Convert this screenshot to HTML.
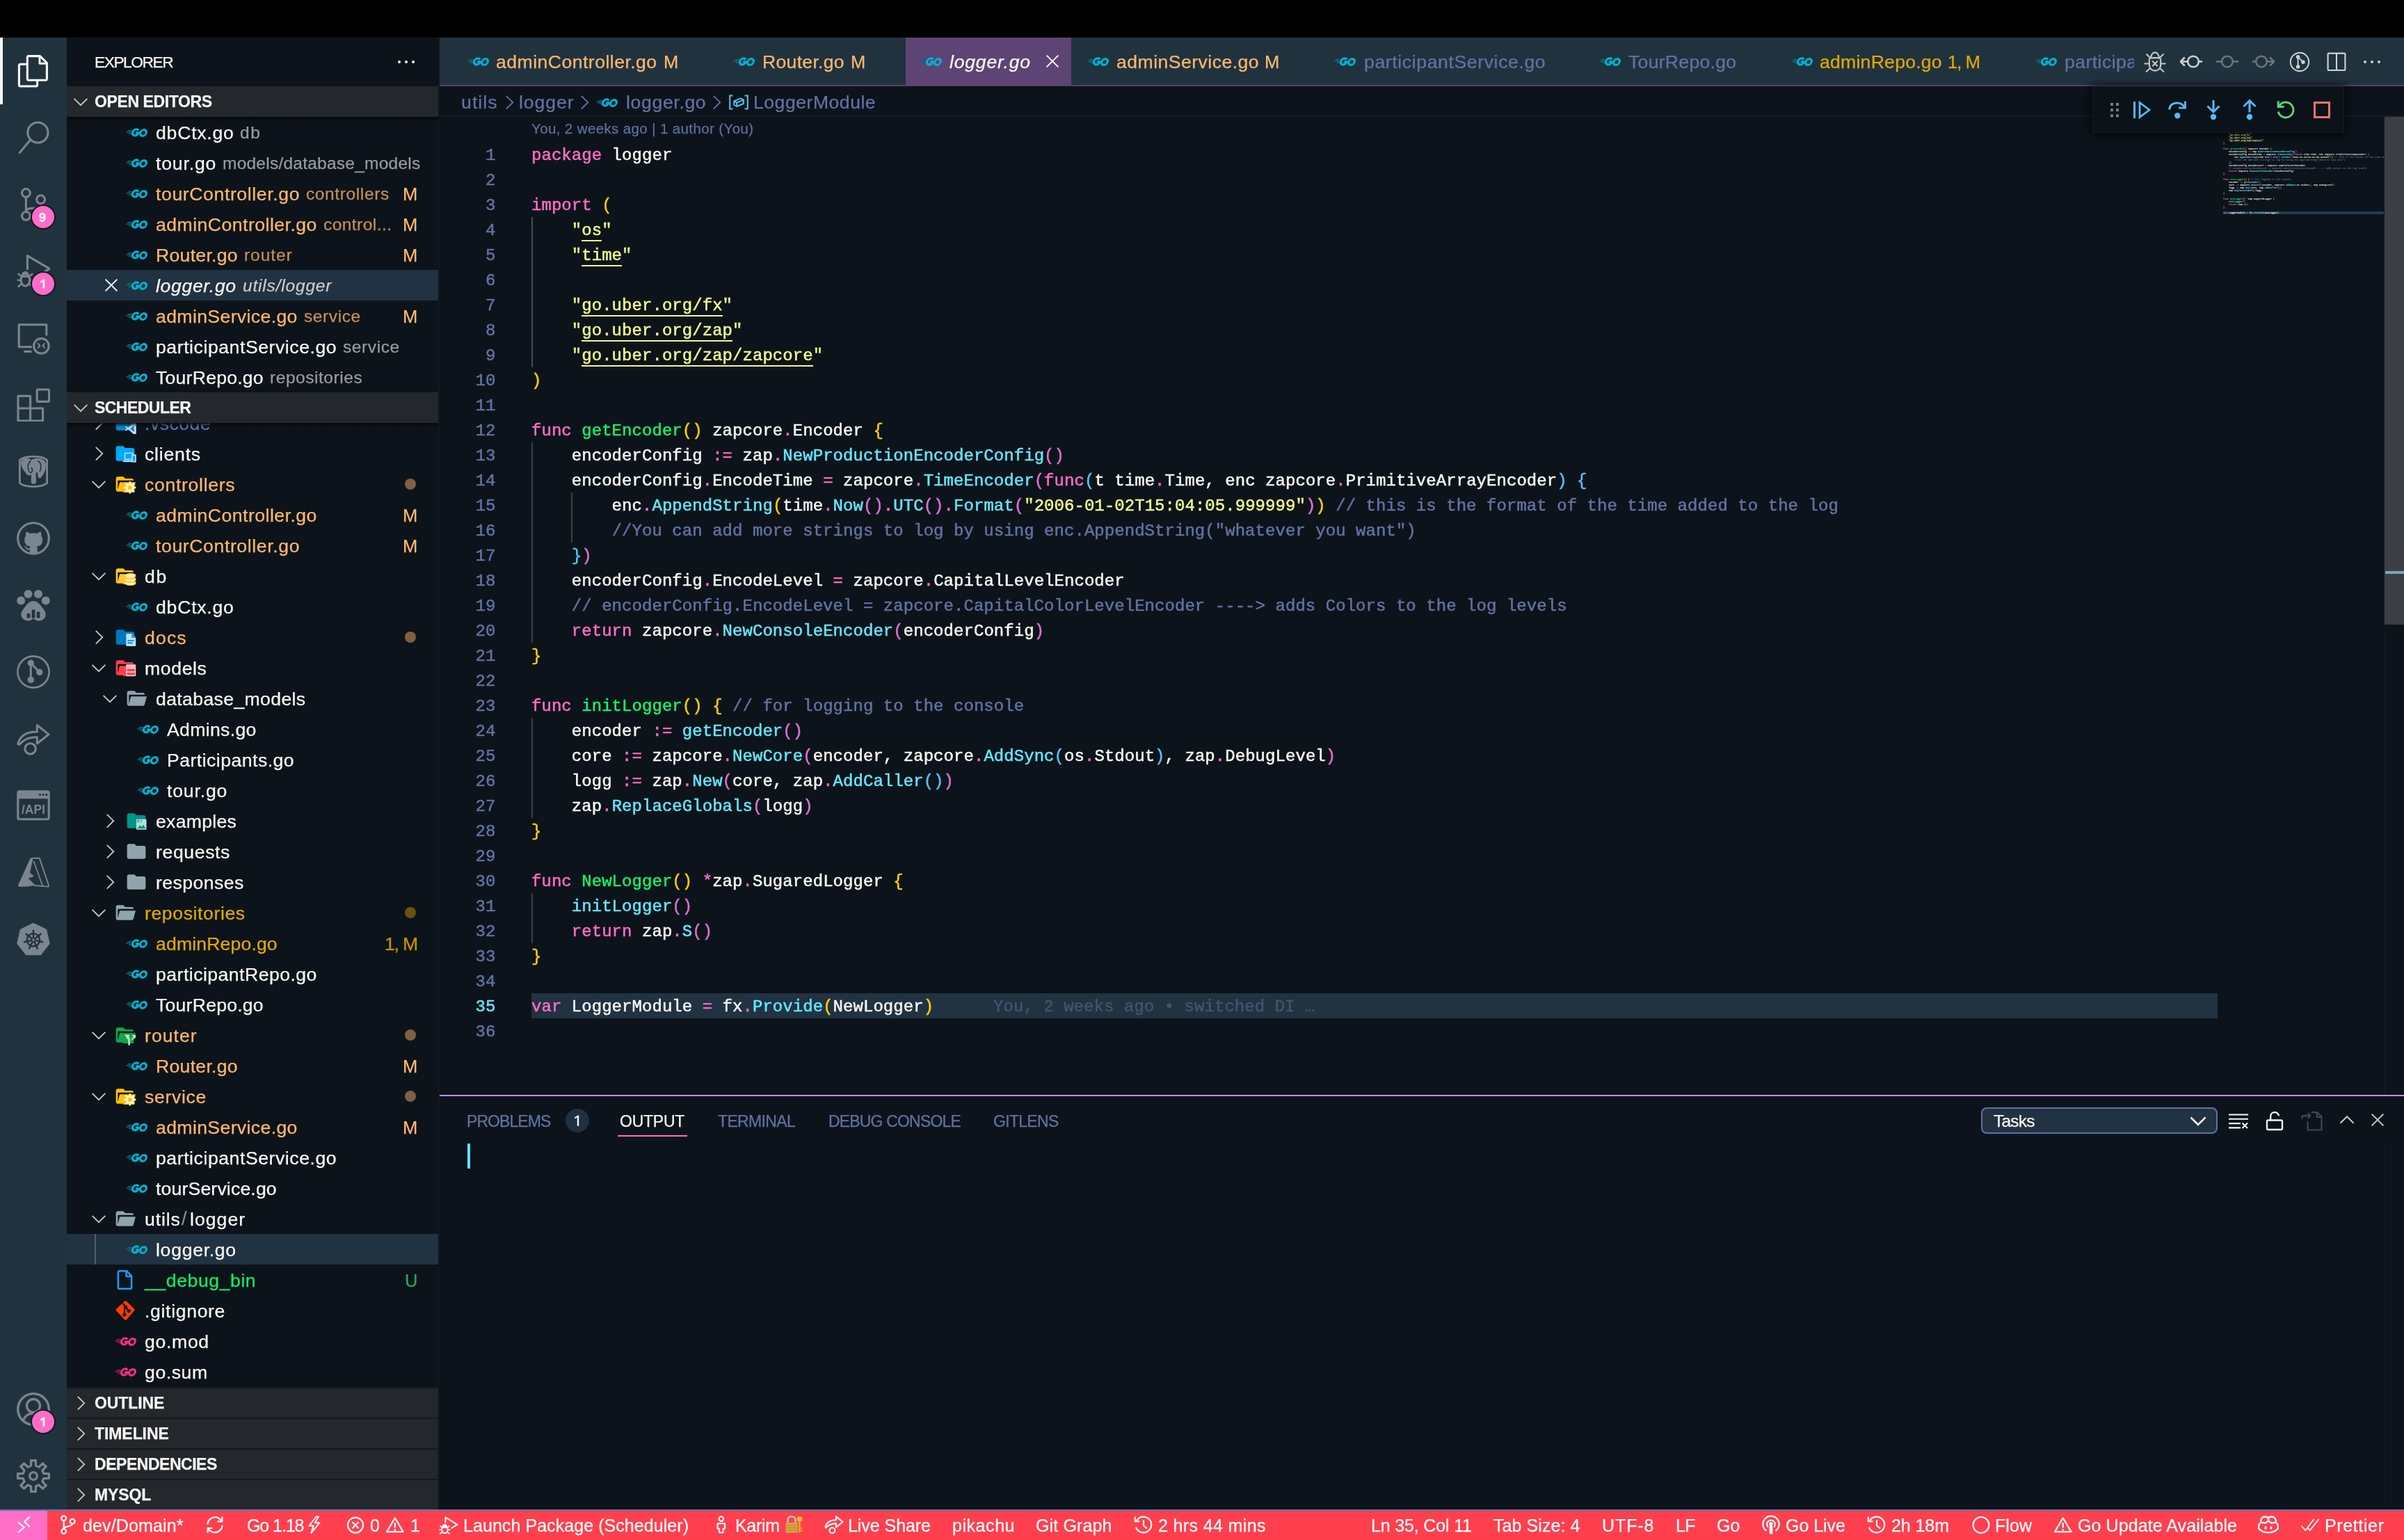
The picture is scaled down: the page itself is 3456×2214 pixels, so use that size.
<!DOCTYPE html>
<html><head><meta charset="utf-8"><title>logger.go — Scheduler</title>
<style>html,body{margin:0;padding:0;background:#0d131a}
body{width:3456px;height:2214px;font-family:"Liberation Sans",sans-serif;}
#root{position:relative;width:3456px;height:2214px;overflow:hidden;background:#0d131a}
#root>div,#root>svg,#root>span,.abs{position:absolute}
.t{position:absolute;white-space:pre;line-height:1;-webkit-text-stroke:0.25px;will-change:transform}
svg{overflow:visible}
.code{position:absolute;white-space:pre;font-family:"Liberation Mono",monospace;font-size:24px;line-height:36px;letter-spacing:0.05px;color:#f8f8f2;-webkit-text-stroke:0.5px;will-change:transform}
.code i{font-style:normal}
.k{color:#ff6ec7}.f{color:#12f56b}.m{color:#62e8ff}.s{color:#f1fa8c}.q{color:#e9f284}.c{color:#6272a4}
.b1{color:#ffd000}.b2{color:#e070d2}.b3{color:#55c3f7}
.u{border-bottom:2px solid #f1fa8c;padding-bottom:0px}
</style></head>
<body>
<svg width="0" height="0" style="position:absolute"><defs><symbol id="chev-d" viewBox="0 0 32 32"><path d="M6.6 11.8 16 21.2 25.4 11.8" fill="none" stroke="currentColor" stroke-width="1.9"/></symbol><symbol id="chev-d2" viewBox="0 0 32 32"><path d="M5.5 11.5 16 22 26.5 11.5" fill="none" stroke="currentColor" stroke-width="2.6"/></symbol><symbol id="chev-u" viewBox="0 0 32 32"><path d="M6.5 20.7 16 11.2 25.5 20.7" fill="none" stroke="currentColor" stroke-width="2"/></symbol><symbol id="chev-r" viewBox="0 0 32 32"><path d="M11.8 6.8 21.2 16.2 11.8 25.6" fill="none" stroke="currentColor" stroke-width="1.9"/></symbol><symbol id="x" viewBox="0 0 32 32"><path d="M7.6 7.6 24.4 24.4M24.4 7.6 7.6 24.4" fill="none" stroke="currentColor" stroke-width="2"/></symbol><symbol id="go" viewBox="0 0 32 32"><g fill="none" stroke="#00b2cf" stroke-width="3.1" transform="translate(3.6 0) skewX(-12)"><path d="M18.4 13.5A4.5 4.5 0 1 0 19.1 18.1L19.1 16.9 15.2 16.9" stroke-linejoin="round"/><ellipse cx="26" cy="17" rx="4.3" ry="4.4"/></g><g stroke="#0a6c7a" stroke-width="1.4" fill="none"><path d="M3.5 13.8H10M1.4 16H8.8M5 18.200H9"/></g></symbol><symbol id="gomod" viewBox="0 0 32 32"><g fill="none" stroke="#fb2d83" stroke-width="3.1" transform="translate(3.6 0) skewX(-12)"><path d="M18.4 13.5A4.5 4.5 0 1 0 19.1 18.1L19.1 16.9 15.2 16.9" stroke-linejoin="round"/><ellipse cx="26" cy="17" rx="4.3" ry="4.4"/></g><g stroke="#a31b4d" stroke-width="1.4" fill="none"><path d="M3.5 13.8H10M1.4 16H8.8M5 18.200H9"/></g></symbol><symbol id="f-closed" viewBox="0 0 24 24"><path d="M10 4H4c-1.11 0-2 .89-2 2v12a2 2 0 0 0 2 2h16a2 2 0 0 0 2-2V8c0-1.11-.9-2-2-2h-8l-2-2z" fill="#90a4ae"/></symbol><symbol id="f-open" viewBox="0 0 24 24"><path d="M19 20H4c-1.11 0-2-.9-2-2V6c0-1.11.89-2 2-2h6l2 2h7a2 2 0 0 1 2 2H4v10l2.14-8h17.07l-2.28 8.5c-.23.87-1.01 1.5-1.93 1.5z" fill="#90a4ae"/></symbol><symbol id="f-clients" viewBox="0 0 24 24"><path d="M10 4H4c-1.11 0-2 .89-2 2v12a2 2 0 0 0 2 2h16a2 2 0 0 0 2-2V8c0-1.11-.9-2-2-2h-8l-2-2z" fill="#03a9f4"/><g fill="none" stroke="#b3e5fc" stroke-width="1.100"><rect x="11.600" y="11.600" width="8.600" height="6.600" fill="#03a9f4"/><path d="M9.600 20.300h9.600" stroke-width="1.700"/><rect x="19.600" y="13.700" width="3.600" height="7.200" fill="#03a9f4" stroke-width="1.200"/></g></symbol><symbol id="f-ctrl" viewBox="0 0 24 24"><path d="M19 20H4c-1.11 0-2-.9-2-2V6c0-1.11.89-2 2-2h6l2 2h7a2 2 0 0 1 2 2H4v10l2.14-8h17.07l-2.28 8.5c-.23.87-1.01 1.5-1.93 1.5z" fill="#ffc107"/><path d="M11 12h11v9H9.6z" fill="#ffc107"/><path d="M15.95 11.35L16.08 9.28L18.12 9.28L18.25 11.35L19.36 11.81L20.92 10.44L22.36 11.88L20.99 13.44L21.45 14.55L23.52 14.68L23.52 16.72L21.45 16.85L20.99 17.96L22.36 19.52L20.92 20.96L19.36 19.59L18.25 20.05L18.12 22.12L16.08 22.12L15.95 20.05L14.84 19.59L13.28 20.96L11.84 19.52L13.21 17.96L12.75 16.85L10.68 16.72L10.68 14.68L12.75 14.55L13.21 13.44L11.84 11.88L13.28 10.44L14.84 11.81Z" fill="#fff3c4"/><circle cx="17.1" cy="15.7" r="2.2" fill="#ffc107"/></symbol><symbol id="f-db" viewBox="0 0 24 24"><path d="M19 20H4c-1.11 0-2-.9-2-2V6c0-1.11.89-2 2-2h6l2 2h7a2 2 0 0 1 2 2H4v10l2.14-8h17.07l-2.28 8.5c-.23.87-1.01 1.5-1.93 1.5z" fill="#ffca28"/><path d="M11 12h11v9H9.6z" fill="#ffca28"/><g fill="#ffecb3" stroke="#ffca28" stroke-width=".5"><path d="M11.900 17.800c1.200 1.900 10.200 1.900 11.400 0v2.600c-1.200 2.300-10.200 2.300-11.400 0z"/><path d="M11.900 14c1.200 1.900 10.200 1.900 11.400 0v2.600c-1.200 2.200-10.200 2.200-11.400 0z"/><ellipse cx="17.600" cy="11.900" rx="5.700" ry="2.700"/></g></symbol><symbol id="f-docs" viewBox="0 0 24 24"><path d="M10 4H4c-1.11 0-2 .89-2 2v12a2 2 0 0 0 2 2h16a2 2 0 0 0 2-2V8c0-1.11-.9-2-2-2h-8l-2-2z" fill="#0277bd"/><path d="M13.800 8.300h5.400l4.200 4.200v8.500a.8.800 0 0 1-.8.800h-8.800a.8.800 0 0 1-.8-.8V9.100a.8.800 0 0 1 .8-.8z" fill="#b3e5fc"/><path d="M19 8.300v4.400h4.400z" fill="#0277bd" opacity=".75"/><path d="M14.600 15.800h7M14.600 18.300h5.400" stroke="#0277bd" stroke-width="1.200" fill="none"/></symbol><symbol id="f-models" viewBox="0 0 24 24"><path d="M19 20H4c-1.11 0-2-.9-2-2V6c0-1.11.89-2 2-2h6l2 2h7a2 2 0 0 1 2 2H4v10l2.14-8h17.07l-2.28 8.5c-.23.87-1.01 1.5-1.93 1.5z" fill="#ff3d4d"/><path d="M11 12h11v9H9.6z" fill="#ff3d4d"/><rect x="12.900" y="8.500" width="10.500" height="12.600" rx="1" fill="#ffcdd2"/><path d="M13.900 13.400h8.500v2.500h-8.500zM13.900 17.300h8.500v2.500h-8.500z" fill="#ff3d4d"/><path d="M13.900 10h8.500v1.800h-8.500z" fill="#ffcdd2" stroke="#ff8a93" stroke-width=".4"/></symbol><symbol id="f-examples" viewBox="0 0 24 24"><path d="M10 4H4c-1.11 0-2 .89-2 2v12a2 2 0 0 0 2 2h16a2 2 0 0 0 2-2V8c0-1.11-.9-2-2-2h-8l-2-2z" fill="#009688"/><rect x="12" y="10.300" width="10.900" height="11.300" rx=".6" fill="#b2dfdb"/><path d="M13 20.500l2.900-3.800 1.800 2 1.800-2.500 2.600 4.300zM13.200 11.500h2.500l-2.500 3zM16.800 11.400l1.400.1-2 2.900" fill="#009688"/></symbol><symbol id="f-router" viewBox="0 0 24 24"><path d="M19 20H4c-1.11 0-2-.9-2-2V6c0-1.11.89-2 2-2h6l2 2h7a2 2 0 0 1 2 2H4v10l2.14-8h17.07l-2.28 8.5c-.23.87-1.01 1.5-1.93 1.5z" fill="#13a64a"/><path d="M11 12h10v9H9.6z" fill="#13a64a"/><path d="M16.2 23v-6.2c0-1.6-1-2.6-2.6-3.2" stroke="#c8e6c9" stroke-width="1.9" fill="none"/><path d="M12.4 12.2l3.6.3-1.6 3.1zM19 17.4l2.4-3.6M20 12.3l3 .6-1 2.9" fill="#c8e6c9" stroke="#c8e6c9" stroke-width="1.2"/></symbol><symbol id="f-vscode" viewBox="0 0 24 24"><path d="M10 4H4c-1.11 0-2 .89-2 2v12a2 2 0 0 0 2 2h16a2 2 0 0 0 2-2V8c0-1.11-.9-2-2-2h-8l-2-2z" fill="#0288d1"/><path d="M21.6 11.2l-6.4 6 -2.4-1.9-1 .6 2.2 2.1-2.2 2.1 1 .6 2.4-1.9 6.4 6 2.2-1v-11.6zM21.4 15v6.4l-4.2-3.2z" fill="#b3e5fc"/></symbol><symbol id="file" viewBox="0 0 32 32"><path d="M7.5 3.2h10.6l7 7.4v16.6a1.6 1.6 0 0 1-1.6 1.6H7.5a1.6 1.6 0 0 1-1.6-1.6V4.8a1.6 1.6 0 0 1 1.6-1.6zM17.6 3.4v7.6h7.2" fill="none" stroke="#1a9fff" stroke-width="2.5" stroke-linejoin="round"/></symbol><symbol id="git" viewBox="0 0 32 32"><path d="M15.4 2.4a1.6 1.6 0 0 1 2.2 0l11.6 11.6a1.6 1.6 0 0 1 0 2.2L17.6 29.6a1.6 1.6 0 0 1-2.2 0L3 16.2a1.6 1.6 0 0 1 0-2.2z" fill="#ff3d00"/><g stroke="#0d131a" stroke-width="2" fill="#0d131a"><path d="M12.2 5.8l5 5M15 10.4v11.2M16.6 12l4.2 4.2" fill="none"/><circle cx="15" cy="22" r="1.6"/><circle cx="16.6" cy="11" r="1.6"/><circle cx="21.2" cy="16.6" r="1.6"/></g></symbol><symbol id="sym-var" viewBox="0 0 32 32"><g fill="none" stroke="currentColor" stroke-width="2.100"><path d="M7.500 6.500H3.200v19h4.300M24.500 6.500h4.300v19h-4.300"/><path d="M9.200 14.400l9.800-4 4 2.200v5.400l-9.800 4-4-2.200zM9.200 14.400l4 2.200 9.800-4M13.200 16.600v5.400" stroke-width="1.900" stroke-linejoin="round"/></g></symbol><symbol id="a-files" viewBox="0 0 48 48"><g fill="none" stroke="currentColor" stroke-width="3.1" stroke-linejoin="round"><path d="M17.3 2.6H33.5L43.4 12.5V35.3a2 2 0 0 1-2 2H17.3a2 2 0 0 1-2-2V4.6a2 2 0 0 1 2-2z"/><path d="M33 2.8v10.4h10.2" stroke-width="2.9"/><path d="M14.8 14.4H5.4a2 2 0 0 0-2 2V44a2 2 0 0 0 2 2H27.6a2 2 0 0 0 2-2V37.6"/></g></symbol><symbol id="a-search" viewBox="0 0 48 48"><g fill="none" stroke="currentColor" stroke-width="3.1"><circle cx="30.4" cy="16.6" r="14.6"/><path d="M19.6 27.2 3.4 46.6"/></g></symbol><symbol id="a-scm" viewBox="0 0 48 48"><g fill="none" stroke="currentColor" stroke-width="3.1"><circle cx="13.4" cy="7.4" r="5.9"/><circle cx="34.6" cy="16.8" r="5.9"/><circle cx="13.4" cy="40.4" r="5.9"/><path d="M13.4 13.4V34.4M34.6 22.8c0 6-6 6.6-12.4 6.6-5 0-8.8 1.2-8.8 5"/></g></symbol><symbol id="a-debug" viewBox="0 0 48 48"><g fill="none" stroke="currentColor" stroke-width="3.1" stroke-linejoin="round"><path d="M15.4 22V1.6L47.2 20.4 34 28.4"/><ellipse cx="12.4" cy="36.6" rx="6.4" ry="8.6"/><path d="M6 31.6h12.8M0.6 36.8h5.4M18.8 36.8h5.4M1.6 27.4l4.6 3.4M23.2 27.4l-4.6 3.4M1.6 46.4l5-4M23.2 46.4l-5-4M8.4 29.6c0-5.6 8-5.6 8 0" stroke-width="2.6"/></g></symbol><symbol id="a-remote" viewBox="0 0 48 48"><g fill="none" stroke="currentColor" stroke-width="3.1" stroke-linejoin="round"><path d="M22 36.8H3.2V4.8H42.8V20.4"/><path d="M10.4 43.4H21.4"/><circle cx="35.4" cy="35.4" r="10.8"/><path d="M30.2 31.4l3.2 3.6-3.2 3.6M40.6 31.4l-3.2 3.6 3.2 3.6" stroke-width="2.1"/></g></symbol><symbol id="a-ext" viewBox="0 0 48 48"><g fill="none" stroke="currentColor" stroke-width="3.1" stroke-linejoin="round"><path d="M2 11.4H19.6V29H37.6V47H2zM2 29H19.6V47" /><rect x="29.2" y="2" width="17.4" height="17.4" rx="1.5"/></g></symbol><symbol id="a-pg" viewBox="0 0 48 48"><g fill="none" stroke="currentColor" stroke-width="3.1"><path d="M4.400 7.400c7-6.600 32.200-6.600 39.200 0V40.600c-7 6.600-32.200 6.600-39.200 0z" stroke-width="2.800"/></g><g fill="currentColor"><path d="M6.500 8.500c3-5 11-5.500 14.500-1 4-3.500 14-4 19.500 1.500 3.500 5.500 1 16-5.500 23.500-1.500 1.500-4.500 1-4.500-1.500l-.5-6c-.8.600-1.600.800-2.500.800l.5 12.500c.3 5-7.300 5-7.300 0l.3-9.800c-3 2-7 .5-8.500-3.500C9 21.500 4.500 13.500 6.500 8.500z"/></g><g fill="none" stroke="#21323f" stroke-width="1.600"><path d="M20.500 8.500c-4.500 3-5.500 9.500-3 15 1.500 3 4.500 2.500 5-1 .3-2-.5-3.500-2-4M30.500 8.500c5 3 5.500 10.500 2.500 15.500"/></g></symbol><symbol id="a-github" viewBox="0 0 48 48"><circle cx="24" cy="24" r="22.3" fill="none" stroke="currentColor" stroke-width="3.1"/><path fill="currentColor" d="M18.800 45.500v-5.300c-4.600 1-5.600-2-5.600-2-.8-1.900-1.900-2.400-1.900-2.400-1.500-1 .1-1 .1-1 1.700.1 2.600 1.700 2.600 1.700 1.500 2.600 4 1.800 4.900 1.400.2-1.100.6-1.800 1-2.200-4.500-.6-8.700-2.400-8.700-10 0-2.200.8-4 2.100-5.400-.2-.5-.9-2.600.2-5.400 0 0 1.700-.5 5.600 2.100a19.400 19.400 0 0 1 10.200 0c3.900-2.600 5.600-2.100 5.600-2.100 1.100 2.800.4 4.900.2 5.400 1.300 1.400 2.100 3.200 2.100 5.400 0 7.700-4.200 9.400-8.700 9.900.7.600 1.300 1.800 1.300 3.700v6.200z"/></symbol><symbol id="a-paw" viewBox="0 0 48 48"><g fill="currentColor"><circle cx="6.200" cy="17.600" r="6"/><circle cx="16.500" cy="8" r="6"/><circle cx="31" cy="8" r="6"/><circle cx="41.800" cy="17.600" r="6"/><path d="M24 18c5.500 0 8.500 4 12 8.500 3.500 4.500 6.500 8 5.500 12.500-1 5-6 7.500-10 7.500-3 0-5.500-1.500-7.500-3.500-2 2-4.500 3.500-7.500 3.500-4 0-9-2.500-10-7.500-1-4.500 2-8 5.500-12.500C15.500 22 18.500 18 24 18z"/></g><g fill="#21323f"><rect x="14.600" y="36" width="4.600" height="6.500"/><rect x="21.700" y="30.500" width="4.600" height="12"/><rect x="28.800" y="33.500" width="4.600" height="9"/></g></symbol><symbol id="a-gitgraph" viewBox="0 0 48 48"><circle cx="24" cy="24" r="22.600" fill="none" stroke="currentColor" stroke-width="2.600"/><g fill="currentColor"><circle cx="20.300" cy="11.200" r="4.700"/><circle cx="32.800" cy="24.400" r="4.700"/><circle cx="20.300" cy="35.400" r="4.700"/></g><path d="M20.300 11.200V35.400M20.300 11.200 32.800 24.400" fill="none" stroke="currentColor" stroke-width="3"/></symbol><symbol id="a-share" viewBox="0 0 48 48"><g fill="none" stroke="currentColor" stroke-width="3.1" stroke-linejoin="round"><path d="M1.800 31.500c3-12 13.500-17.500 27.500-17.500V4.500L46 17.800 29.300 31V21.800c-10-.5-18 2-25.500 10.700z" stroke-width="3"/><circle cx="19.600" cy="38.400" r="7.700"/></g></symbol><symbol id="a-api" viewBox="0 0 48 48"><rect x="1.800" y="3.800" width="44.400" height="40" rx="2" fill="none" stroke="currentColor" stroke-width="3.1"/><rect x="1.800" y="3.800" width="44.400" height="10.500" fill="currentColor"/><g fill="#21323f"><circle cx="33.500" cy="8.500" r="1.600"/><circle cx="38.200" cy="8.500" r="1.600"/><circle cx="42.900" cy="8.500" r="1.600"/></g><text x="7" y="35.500" font-family="Liberation Sans" font-weight="700" font-size="17.500" fill="currentColor" textLength="34" lengthAdjust="spacingAndGlyphs">/API</text></symbol><symbol id="a-azure" viewBox="0 0 48 48"><path fill="currentColor" d="M19.800 3.400h3.800L19 24.500l6 5.200-9.500 3.500 10 9.800c-6 1-14 2-21.200 2-1.800 0-2.500-1.400-1.900-3.200z"/><path d="M22.800 3.800H32.800L46 42.800c.4 1.300-.4 1.900-1.500 1.800L25.800 43 15.800 33.300" fill="none" stroke="currentColor" stroke-width="1.900" stroke-linejoin="round"/><path d="M24.300 8 37.500 44" fill="none" stroke="currentColor" stroke-width="1.700"/></symbol><symbol id="a-k8s" viewBox="0 0 48 48"><polygon points="24.00,2.00 42.22,10.77 46.72,30.48 34.11,46.29 13.89,46.29 1.28,30.48 5.78,10.77" fill="currentColor" stroke="currentColor" stroke-width="2" stroke-linejoin="round"/><g fill="none" stroke="#21323f" stroke-width="2.400"><circle cx="24" cy="25.300" r="9.200"/><path d="M24 25.300L24.00 10.80M24 25.300L35.34 16.26M24 25.300L38.14 28.53M24 25.300L30.29 38.36M24 25.300L17.71 38.36M24 25.300L9.86 28.53M24 25.300L12.66 16.26"/></g><circle cx="24" cy="25.300" r="2.600" fill="currentColor" stroke="#21323f" stroke-width="1.500"/></symbol><symbol id="a-account" viewBox="0 0 48 48"><g fill="none" stroke="currentColor" stroke-width="3.300"><circle cx="24" cy="24" r="22.300"/><circle cx="24" cy="19" r="9.500"/><path d="M9.300 40.500c2-6.500 7.500-10.500 14.700-10.500s12.700 4 14.700 10.500"/></g></symbol><symbol id="a-gear" viewBox="0 0 48 48"><path d="M20.45 9.22L20.82 1.63L27.18 1.63L27.55 9.22L31.94 11.04L37.57 5.93L42.07 10.43L36.96 16.06L38.78 20.45L46.37 20.82L46.37 27.18L38.78 27.55L36.96 31.94L42.07 37.57L37.57 42.07L31.94 36.96L27.55 38.78L27.18 46.37L20.82 46.37L20.45 38.78L16.06 36.96L10.43 42.07L5.93 37.57L11.04 31.94L9.22 27.55L1.63 27.18L1.63 20.82L9.22 20.45L11.04 16.06L5.93 10.43L10.43 5.93L16.06 11.04Z" fill="none" stroke="currentColor" stroke-width="3.300" stroke-linejoin="miter"/><circle cx="24" cy="24" r="5.300" fill="none" stroke="currentColor" stroke-width="3.300"/></symbol><symbol id="e-bug" viewBox="0 0 32 32"><g fill="none" stroke="currentColor" stroke-width="2.1"><path d="M7.800 12c0-2.500 16.400-2.500 16.400 0v8c0 11.500-16.400 11.500-16.400 0z"/><path d="M10.300 10.200c0-10.500 11.400-10.500 11.400 0M3.500 4.500l5.500 5.500M28.500 4.500 23 10M0.500 18.500h7M24.500 18.500h7M3 30.500l6-5.500M29 30.500l-6-5.500M12.200 14.700l7.600 7.600M19.800 14.700l-7.600 7.600"/></g></symbol><symbol id="e-prev" viewBox="0 0 32 32"><g fill="none" stroke="currentColor" stroke-width="2.500"><circle cx="19" cy="15.500" r="7.800"/><path d="M0.800 15.500h10.400M27 15.500h5M6.800 9.500l-6 6 6 6"/></g></symbol><symbol id="e-mid" viewBox="0 0 32 32"><g fill="none" stroke="currentColor" stroke-width="2.500"><circle cx="16" cy="15.500" r="7.800"/><path d="M0 15.500h8.200M23.800 15.500h8.200"/></g></symbol><symbol id="e-next" viewBox="0 0 32 32"><g fill="none" stroke="currentColor" stroke-width="2.500"><circle cx="13" cy="15.500" r="7.800"/><path d="M0 15.500h5.200M20.800 15.500h10.400M25.200 9.500l6 6-6 6"/></g></symbol><symbol id="e-gitc" viewBox="0 0 32 32"><circle cx="16" cy="16" r="13.200" fill="none" stroke="currentColor" stroke-width="2"/><g fill="currentColor"><circle cx="13.600" cy="8.800" r="2.700"/><circle cx="21" cy="16.200" r="2.700"/><circle cx="13.600" cy="23" r="2.700"/></g><path d="M13.600 8.800V23M13.600 8.800l7.400 7.400" fill="none" stroke="currentColor" stroke-width="1.900"/></symbol><symbol id="e-split" viewBox="0 0 32 32"><g fill="none" stroke="currentColor" stroke-width="2.100"><rect x="3.600" y="3.600" width="24.800" height="24.400" rx="1.500"/><path d="M16 3.600V28"/></g></symbol><symbol id="d-grip" viewBox="0 0 32 32"><g fill="currentColor"><rect x="10" y="6" width="4" height="4"/><rect x="18" y="6" width="4" height="4"/><rect x="10" y="14.200" width="4" height="4"/><rect x="18" y="14.200" width="4" height="4"/><rect x="10" y="22.400" width="4" height="4"/><rect x="18" y="22.400" width="4" height="4"/></g></symbol><symbol id="d-cont" viewBox="0 0 32 32"><path d="M5.500 4v24" fill="none" stroke="currentColor" stroke-width="3"/><path d="M13 5.500V26.500L27 16z" fill="none" stroke="currentColor" stroke-width="2.800" stroke-linejoin="miter"/></symbol><symbol id="d-over" viewBox="0 0 32 32"><path d="M4.500 15.500C6.500 3 22 3.500 27 12.500" fill="none" stroke="currentColor" stroke-width="3"/><path d="M27.500 3.500V13.200H18" fill="none" stroke="currentColor" stroke-width="2.800"/><circle cx="16.300" cy="24.200" r="4.200" fill="currentColor"/></symbol><symbol id="d-into" viewBox="0 0 32 32"><path d="M16 2v16.500M7.500 10.500 16 19l8.500-8.500" fill="none" stroke="currentColor" stroke-width="3"/><circle cx="16" cy="26" r="4.200" fill="currentColor"/></symbol><symbol id="d-out" viewBox="0 0 32 32"><path d="M16 19.500V3M7.500 11 16 2.500 24.500 11" fill="none" stroke="currentColor" stroke-width="3"/><circle cx="16" cy="26" r="4.200" fill="currentColor"/></symbol><symbol id="d-restart" viewBox="0 0 32 32"><path d="M6.800 9.800A11 11 0 1 1 5.200 18.500" fill="none" stroke="currentColor" stroke-width="3"/><path d="M5.200 3.200v8.200h8.400" fill="none" stroke="currentColor" stroke-width="3"/></symbol><symbol id="d-stop" viewBox="0 0 32 32"><rect x="5.500" y="5.500" width="21" height="21" fill="none" stroke="currentColor" stroke-width="3"/></symbol><symbol id="p-clear" viewBox="0 0 32 32"><path d="M2 7.500h28M2 13.800h28M2 20.100h17M2 26.400h17M21.500 19.500l7.500 7.500M29 19.500l-7.500 7.500" fill="none" stroke="currentColor" stroke-width="2.100"/></symbol><symbol id="p-unlock" viewBox="0 0 32 32"><g fill="none" stroke="currentColor" stroke-width="2.300"><rect x="5" y="15.500" width="22" height="13.500" rx="1.800"/><path d="M10.200 15.500V9.800c0-7.500 11.600-7.500 11.600 -0.600"/></g></symbol><symbol id="p-open" viewBox="0 0 32 32"><g fill="none" stroke="currentColor" stroke-width="2.200" stroke-linejoin="round"><path d="M14.500 4.200h8.700l6.300 6.300V29.500H9.500V17"/><path d="M22.800 4.400v6.600h6.600M1.600 13.500V9.200H13M9.800 5.600l3.600 3.600-3.600 3.600"/></g></symbol><symbol id="s-remote" viewBox="0 0 32 32"><path d="M8 12.400l8.800 7.400-8.800 7.400M24.800 4.400l-7.400 7.400 7.400 7.400" fill="none" stroke="currentColor" stroke-width="2.200"/></symbol><symbol id="s-branch" viewBox="0 0 32 32"><g fill="none" stroke="currentColor" stroke-width="2.200"><circle cx="11.700" cy="6.800" r="3.400"/><circle cx="24.200" cy="11.200" r="3.400"/><circle cx="11.700" cy="25.600" r="3.400"/><path d="M11.700 10.200v12M24.200 14.600c0 5-12.500 2.500-12.500 7.600"/></g></symbol><symbol id="s-sync" viewBox="0 0 32 32"><g fill="none" stroke="currentColor" stroke-width="2.200"><path d="M5.400 15.600A10.700 10.700 0 0 1 25.600 11M26.600 16.800A10.700 10.700 0 0 1 6.400 21.400"/><path d="M26.400 4.600v6.800h-6.800M5.600 27.800v-6.800h6.800" stroke-width="2.100"/></g></symbol><symbol id="s-zap" viewBox="0 0 32 32"><path d="M19.500 4.500 9.500 17.500h6.200L12.200 28 24.500 13.200h-6.800L22.800 4.500z" fill="none" stroke="currentColor" stroke-width="2" stroke-linejoin="round"/></symbol><symbol id="s-error" viewBox="0 0 32 32"><g fill="none" stroke="currentColor" stroke-width="2.200"><circle cx="16" cy="16.600" r="11"/><path d="M11.400 12l9.200 9.200M20.600 12l-9.200 9.200"/></g></symbol><symbol id="s-warn" viewBox="0 0 32 32"><g fill="none" stroke="currentColor" stroke-width="2.200" stroke-linejoin="round"><path d="M15.800 6.400 27.600 26.200H4z"/><path d="M15.800 13.200v7M15.800 22.200v2.400" stroke-width="2.400"/></g></symbol><symbol id="s-debug" viewBox="0 0 32 32"><g fill="none" stroke="currentColor" stroke-width="2" stroke-linejoin="round"><path d="M11.400 13.500V5.400L28.500 15.800 19.500 21.200"/><ellipse cx="10.400" cy="23" rx="4.200" ry="5.200"/><path d="M6.200 20h8.400M2.400 23.200h3.600M14.800 23.200h3.600M3.200 17.400l3 2.400M17.600 17.400l-3 2.400M3.200 29.400l3.400-2.600M17.600 29.400l-3.400-2.600M7.800 18.600c0-3.600 5.200-3.600 5.200 0" stroke-width="1.800"/></g></symbol><symbol id="s-person" viewBox="0 0 32 32"><g fill="none" stroke="currentColor" stroke-width="2.100"><circle cx="15.800" cy="7.600" r="3.300"/><path d="M10.600 14.200h10.400v7.400h-2.400v5.600h-5.600v-5.600h-2.400z" stroke-linejoin="round"/></g></symbol><symbol id="s-lock" viewBox="0 0 32 32"><path d="M7.500 14V9.500c0-7 11-7 11 0V14" fill="none" stroke="#b9c0c4" stroke-width="2.600"/><rect x="4.500" y="13" width="17.500" height="14.500" rx="1.500" fill="#d9a441"/><path d="M4.500 17h17.500M4.500 20.500h17.500M4.500 24h17.500" stroke="#b8862c" stroke-width="1.200"/><g fill="#f6b93b" stroke="#c98a1b" stroke-width=".6"><circle cx="24.500" cy="8" r="4"/><rect x="23.200" y="11" width="2.600" height="16"/><rect x="25.800" y="20" width="2.400" height="2"/><rect x="25.800" y="23.500" width="2.400" height="2"/></g></symbol><symbol id="s-share" viewBox="0 0 32 32"><g fill="none" stroke="currentColor" stroke-width="2.100" stroke-linejoin="round"><path d="M3.600 19.500c1.600-7 7.600-10.200 15.400-10.200V4.400L28.600 12 19 19.600V14.400c-5.800-.3-10.400 1.200-14.600 6z"/><circle cx="13.400" cy="24.200" r="3.900"/></g></symbol><symbol id="s-history" viewBox="0 0 32 32"><g fill="none" stroke="currentColor" stroke-width="2.200"><path d="M6.200 9.800A11.400 11.400 0 1 1 5 19.600"/><path d="M3.800 4.600v6.600h6.600M16 9v8.200l5 4.200" stroke-width="2.100"/></g></symbol><symbol id="s-broadcast" viewBox="0 0 32 32"><g fill="none" stroke="currentColor" stroke-width="2.200"><path d="M9.500 24.800A11.600 11.600 0 1 1 22.500 24.800"/><path d="M11.800 19.500A5.800 5.800 0 1 1 20.200 19.500"/></g><circle cx="16" cy="15" r="2.700" fill="currentColor"/><rect x="13.600" y="17.500" width="4.800" height="12" rx="1.600" fill="currentColor"/></symbol><symbol id="s-circle" viewBox="0 0 32 32"><circle cx="16" cy="16.400" r="11.400" fill="none" stroke="currentColor" stroke-width="2.200"/></symbol><symbol id="s-copilot" viewBox="0 0 32 32"><g fill="none" stroke="currentColor" stroke-width="2.300" stroke-linejoin="round"><path d="M5.500 13.500c-1.500-6.500 2.500-9 6-9 3 0 4.500 1.500 4.500 4 0-2.500 1.500-4 4.500-4 3.500 0 7.500 2.500 6 9"/><path d="M5 13.500c-2 .8-2.800 2.200-2.800 4.200v3.800c3 3.600 8.400 5.800 13.800 5.800s10.800-2.200 13.800-5.800v-3.800c0-2-.8-3.400-2.800-4.200"/><path d="M6.500 12.500c2 1.500 7.500 1.500 9.500-2.500 2 4 7.500 4 9.500 2.500"/><path d="M12 18.500v4M20 18.500v4" stroke-width="2.600"/></g></symbol><symbol id="s-checkall" viewBox="0 0 32 32"><path d="M3.500 17.800l6 6.400L21.500 8M12.800 20.600l3 3.600L28.500 8" fill="none" stroke="currentColor" stroke-width="1.800"/></symbol></defs></svg>
<div id="root"><div style="left:0px;top:0px;width:3456px;height:54px;background:#000;"></div><div style="left:0px;top:54px;width:96px;height:2116px;background:#21323f;"></div><div style="left:0px;top:54px;width:4px;height:96px;background:#f8f8f2;"></div><svg style="left:24px;top:78px;color:#f8f8f2;" width="48" height="48"><use href="#a-files"/></svg><svg style="left:24px;top:174px;color:#7b858d;" width="48" height="48"><use href="#a-search"/></svg><svg style="left:24px;top:270px;color:#7b858d;" width="48" height="48"><use href="#a-scm"/></svg><svg style="left:24px;top:366px;color:#7b858d;" width="48" height="48"><use href="#a-debug"/></svg><svg style="left:24px;top:462px;color:#7b858d;" width="48" height="48"><use href="#a-remote"/></svg><svg style="left:24px;top:558px;color:#7b858d;" width="48" height="48"><use href="#a-ext"/></svg><svg style="left:24px;top:654px;color:#7b858d;" width="48" height="48"><use href="#a-pg"/></svg><svg style="left:24px;top:750px;color:#7b858d;" width="48" height="48"><use href="#a-github"/></svg><svg style="left:24px;top:846px;color:#7b858d;" width="48" height="48"><use href="#a-paw"/></svg><svg style="left:24px;top:942px;color:#7b858d;" width="48" height="48"><use href="#a-gitgraph"/></svg><svg style="left:24px;top:1038px;color:#7b858d;" width="48" height="48"><use href="#a-share"/></svg><svg style="left:24px;top:1134px;color:#7b858d;will-change:transform;" width="48" height="48"><use href="#a-api"/></svg><svg style="left:24px;top:1230px;color:#7b858d;" width="48" height="48"><use href="#a-azure"/></svg><svg style="left:24px;top:1326px;color:#7b858d;" width="48" height="48"><use href="#a-k8s"/></svg><svg style="left:24px;top:2002px;color:#7b858d;" width="48" height="48"><use href="#a-account"/></svg><svg style="left:24px;top:2098px;color:#7b858d;" width="48" height="48"><use href="#a-gear"/></svg><div style="left:44px;top:294px;width:36px;height:36px;border-radius:18px;background:#121920"></div><div style="left:46px;top:296px;width:32px;height:32px;border-radius:16px;background:#ff6bc9"></div><span class="t" style="left:56.36px;top:303.86px;font-size:18px;color:#fff;font-weight:700;">9</span><div style="left:44px;top:390px;width:36px;height:36px;border-radius:18px;background:#121920"></div><div style="left:46px;top:392px;width:32px;height:32px;border-radius:16px;background:#ff6bc9"></div><svg style="left:54px;top:400px" width="16" height="16" viewBox="-8 -8 16 16"><path d="M2.300 -6.400v12.900h-2.800v-9.400q-1.600 1.200-3.300 1.600v-2.400q2.500-.8 3.900-2.700z" fill="#fff"/></svg><div style="left:44px;top:2026px;width:36px;height:36px;border-radius:18px;background:#121920"></div><div style="left:46px;top:2028px;width:32px;height:32px;border-radius:16px;background:#ff6bc9"></div><svg style="left:54px;top:2036px" width="16" height="16" viewBox="-8 -8 16 16"><path d="M2.300 -6.400v12.900h-2.800v-9.400q-1.600 1.200-3.300 1.600v-2.400q2.500-.8 3.900-2.700z" fill="#fff"/></svg><div style="left:96px;top:54px;width:534px;height:2116px;background:#0d131a;"></div><div style="left:630px;top:54px;width:2px;height:2116px;background:#10161e;"></div><span class="t" style="left:136.03px;top:78.40px;font-size:22.8px;color:#f8f8f2;letter-spacing:-1.5px;">EXPLORER</span><div style="left:572px;top:87px;width:4px;height:4px;border-radius:2px;background:#f8f8f2"></div><div style="left:582px;top:87px;width:4px;height:4px;border-radius:2px;background:#f8f8f2"></div><div style="left:592px;top:87px;width:4px;height:4px;border-radius:2px;background:#f8f8f2"></div><svg style="left:179.5px;top:174px;" width="32" height="32"><use href="#go"/></svg><span class="t" style="left:223.55px;top:177.58px;font-size:26.6px;color:#f8f8f2;letter-spacing:0.78px;">dbCtx.go</span><span class="t" style="left:345.43px;top:179.36px;font-size:24.5px;color:#9a9c9c;letter-spacing:1.6px;">db</span><svg style="left:179.5px;top:218px;" width="32" height="32"><use href="#go"/></svg><span class="t" style="left:223.55px;top:221.58px;font-size:26.6px;color:#f8f8f2;letter-spacing:0.847px;">tour.go</span><span class="t" style="left:319.93px;top:223.36px;font-size:24.5px;color:#9a9c9c;letter-spacing:0.238px;">models/database_models</span><svg style="left:179.5px;top:262px;" width="32" height="32"><use href="#go"/></svg><span class="t" style="left:223.55px;top:265.58px;font-size:26.6px;color:#ffb86c;letter-spacing:0.613px;">tourController.go</span><span class="t" style="left:439.93px;top:267.36px;font-size:24.5px;color:#c78f57;letter-spacing:0.618px;">controllers</span><span class="t" style="left:579.37px;top:266.51px;font-size:25.5px;color:#ffb86c;">M</span><svg style="left:179.5px;top:306px;" width="32" height="32"><use href="#go"/></svg><span class="t" style="left:223.55px;top:309.58px;font-size:26.6px;color:#ffb86c;letter-spacing:0.482px;">adminController.go</span><span class="t" style="left:464.93px;top:311.36px;font-size:24.5px;color:#c78f57;letter-spacing:0.442px;">control...</span><span class="t" style="left:579.37px;top:310.51px;font-size:25.5px;color:#ffb86c;">M</span><svg style="left:179.5px;top:350px;" width="32" height="32"><use href="#go"/></svg><span class="t" style="left:223.55px;top:353.58px;font-size:26.6px;color:#ffb86c;letter-spacing:0.291px;">Router.go</span><span class="t" style="left:351.18px;top:355.36px;font-size:24.5px;color:#c78f57;letter-spacing:0.937px;">router</span><span class="t" style="left:579.37px;top:354.51px;font-size:25.5px;color:#ffb86c;">M</span><div style="left:96px;top:388px;width:534px;height:44px;background:#213242;"></div><svg style="left:144px;top:394px;color:#f8f8f2;" width="32" height="32"><use href="#x"/></svg><svg style="left:179.5px;top:394px;" width="32" height="32"><use href="#go"/></svg><span class="t" style="left:223.55px;top:397.58px;font-size:26.6px;color:#f8f8f2;font-style:italic;letter-spacing:0.655px;">logger.go</span><span class="t" style="left:348.68px;top:399.36px;font-size:24.5px;color:#c9cbc8;font-style:italic;letter-spacing:0.815px;">utils/logger</span><svg style="left:179.5px;top:438px;" width="32" height="32"><use href="#go"/></svg><span class="t" style="left:223.55px;top:441.58px;font-size:26.6px;color:#ffb86c;letter-spacing:0.381px;">adminService.go</span><span class="t" style="left:436.93px;top:443.36px;font-size:24.5px;color:#c78f57;letter-spacing:0.607px;">service</span><span class="t" style="left:579.37px;top:442.51px;font-size:25.5px;color:#ffb86c;">M</span><svg style="left:179.5px;top:482px;" width="32" height="32"><use href="#go"/></svg><span class="t" style="left:223.55px;top:485.58px;font-size:26.6px;color:#f8f8f2;letter-spacing:0.566px;">participantService.go</span><span class="t" style="left:493.18px;top:487.36px;font-size:24.5px;color:#9a9c9c;letter-spacing:0.607px;">service</span><svg style="left:179.5px;top:526px;" width="32" height="32"><use href="#go"/></svg><span class="t" style="left:223.55px;top:529.58px;font-size:26.6px;color:#f8f8f2;letter-spacing:0.238px;">TourRepo.go</span><span class="t" style="left:388.18px;top:531.36px;font-size:24.5px;color:#9a9c9c;letter-spacing:0.546px;">repositories</span><div style="left:96px;top:124px;width:534px;height:44px;background:#24282d;"></div><svg style="left:100px;top:130px;color:#c5c5c5;" width="32" height="32"><use href="#chev-d"/></svg><span class="t" style="left:136.02px;top:135.33px;font-size:23px;color:#f8f8f2;font-weight:700;letter-spacing:-0.395px;">OPEN EDITORS</span><div style="left:96px;top:168px;width:534px;height:6px;background:linear-gradient(#05080b,rgba(5,8,11,0))"></div><svg style="left:126px;top:592px;color:#c5c5c5;" width="32" height="32"><use href="#chev-r"/></svg><svg style="left:164px;top:592px;" width="32" height="32"><use href="#f-vscode"/></svg><span class="t" style="left:207.80px;top:595.58px;font-size:26.6px;color:#5f72a8;letter-spacing:0.501px;">.vscode</span><svg style="left:126px;top:636px;color:#c5c5c5;" width="32" height="32"><use href="#chev-r"/></svg><svg style="left:164px;top:636px;" width="32" height="32"><use href="#f-clients"/></svg><span class="t" style="left:207.80px;top:639.58px;font-size:26.6px;color:#f8f8f2;letter-spacing:0.795px;">clients</span><svg style="left:126px;top:680px;color:#c5c5c5;" width="32" height="32"><use href="#chev-d"/></svg><svg style="left:164px;top:680px;" width="32" height="32"><use href="#f-ctrl"/></svg><span class="t" style="left:207.80px;top:683.58px;font-size:26.6px;color:#ffb86c;letter-spacing:0.699px;">controllers</span><div style="left:582px;top:688px;width:16px;height:16px;border-radius:8px;background:#80603f"></div><svg style="left:179.75px;top:724px;" width="32" height="32"><use href="#go"/></svg><span class="t" style="left:223.55px;top:727.58px;font-size:26.6px;color:#ffb86c;letter-spacing:0.482px;">adminController.go</span><span class="t" style="left:579.37px;top:728.51px;font-size:25.5px;color:#ffb86c;">M</span><svg style="left:179.75px;top:768px;" width="32" height="32"><use href="#go"/></svg><span class="t" style="left:223.55px;top:771.58px;font-size:26.6px;color:#ffb86c;letter-spacing:0.613px;">tourController.go</span><span class="t" style="left:579.37px;top:772.51px;font-size:25.5px;color:#ffb86c;">M</span><svg style="left:126px;top:812px;color:#c5c5c5;" width="32" height="32"><use href="#chev-d"/></svg><svg style="left:164px;top:812px;" width="32" height="32"><use href="#f-db"/></svg><span class="t" style="left:207.80px;top:815.58px;font-size:26.6px;color:#f8f8f2;letter-spacing:1.6px;">db</span><svg style="left:179.75px;top:856px;" width="32" height="32"><use href="#go"/></svg><span class="t" style="left:223.55px;top:859.58px;font-size:26.6px;color:#f8f8f2;letter-spacing:0.78px;">dbCtx.go</span><svg style="left:126px;top:900px;color:#c5c5c5;" width="32" height="32"><use href="#chev-r"/></svg><svg style="left:164px;top:900px;" width="32" height="32"><use href="#f-docs"/></svg><span class="t" style="left:207.80px;top:903.58px;font-size:26.6px;color:#ffb86c;letter-spacing:1.157px;">docs</span><div style="left:582px;top:908px;width:16px;height:16px;border-radius:8px;background:#80603f"></div><svg style="left:126px;top:944px;color:#c5c5c5;" width="32" height="32"><use href="#chev-d"/></svg><svg style="left:164px;top:944px;" width="32" height="32"><use href="#f-models"/></svg><span class="t" style="left:207.80px;top:947.58px;font-size:26.6px;color:#f8f8f2;letter-spacing:0.635px;">models</span><svg style="left:142px;top:988px;color:#c5c5c5;" width="32" height="32"><use href="#chev-d"/></svg><svg style="left:180px;top:988px;" width="32" height="32"><use href="#f-open"/></svg><span class="t" style="left:223.80px;top:991.58px;font-size:26.6px;color:#f8f8f2;letter-spacing:0.372px;">database_models</span><svg style="left:195.75px;top:1032px;" width="32" height="32"><use href="#go"/></svg><span class="t" style="left:239.55px;top:1035.58px;font-size:26.6px;color:#f8f8f2;letter-spacing:0.344px;">Admins.go</span><svg style="left:195.75px;top:1076px;" width="32" height="32"><use href="#go"/></svg><span class="t" style="left:239.55px;top:1079.58px;font-size:26.6px;color:#f8f8f2;letter-spacing:0.481px;">Participants.go</span><svg style="left:195.75px;top:1120px;" width="32" height="32"><use href="#go"/></svg><span class="t" style="left:239.55px;top:1123.58px;font-size:26.6px;color:#f8f8f2;letter-spacing:0.847px;">tour.go</span><svg style="left:142px;top:1164px;color:#c5c5c5;" width="32" height="32"><use href="#chev-r"/></svg><svg style="left:180px;top:1164px;" width="32" height="32"><use href="#f-examples"/></svg><span class="t" style="left:223.80px;top:1167.58px;font-size:26.6px;color:#f8f8f2;letter-spacing:0.297px;">examples</span><svg style="left:142px;top:1208px;color:#c5c5c5;" width="32" height="32"><use href="#chev-r"/></svg><svg style="left:180px;top:1208px;" width="32" height="32"><use href="#f-closed"/></svg><span class="t" style="left:223.80px;top:1211.58px;font-size:26.6px;color:#f8f8f2;letter-spacing:0.63px;">requests</span><svg style="left:142px;top:1252px;color:#c5c5c5;" width="32" height="32"><use href="#chev-r"/></svg><svg style="left:180px;top:1252px;" width="32" height="32"><use href="#f-closed"/></svg><span class="t" style="left:223.80px;top:1255.58px;font-size:26.6px;color:#f8f8f2;letter-spacing:0.463px;">responses</span><svg style="left:126px;top:1296px;color:#c5c5c5;" width="32" height="32"><use href="#chev-d"/></svg><svg style="left:164px;top:1296px;" width="32" height="32"><use href="#f-open"/></svg><span class="t" style="left:207.80px;top:1299.58px;font-size:26.6px;color:#e0aa00;letter-spacing:0.608px;">repositories</span><div style="left:582px;top:1304px;width:16px;height:16px;border-radius:8px;background:#6b5407"></div><svg style="left:179.75px;top:1340px;" width="32" height="32"><use href="#go"/></svg><span class="t" style="left:223.55px;top:1343.58px;font-size:26.6px;color:#e0aa00;letter-spacing:0.152px;">adminRepo.go</span><span class="t" style="left:553.30px;top:1343.58px;font-size:26.6px;color:#c59600;letter-spacing:-1.2px;">1, M</span><svg style="left:179.75px;top:1384px;" width="32" height="32"><use href="#go"/></svg><span class="t" style="left:223.55px;top:1387.58px;font-size:26.6px;color:#f8f8f2;letter-spacing:0.48px;">participantRepo.go</span><svg style="left:179.75px;top:1428px;" width="32" height="32"><use href="#go"/></svg><span class="t" style="left:223.55px;top:1431.58px;font-size:26.6px;color:#f8f8f2;letter-spacing:0.238px;">TourRepo.go</span><svg style="left:126px;top:1472px;color:#c5c5c5;" width="32" height="32"><use href="#chev-d"/></svg><svg style="left:164px;top:1472px;" width="32" height="32"><use href="#f-router"/></svg><span class="t" style="left:207.80px;top:1475.58px;font-size:26.6px;color:#ffb86c;letter-spacing:1.035px;">router</span><div style="left:582px;top:1480px;width:16px;height:16px;border-radius:8px;background:#80603f"></div><svg style="left:179.75px;top:1516px;" width="32" height="32"><use href="#go"/></svg><span class="t" style="left:223.55px;top:1519.58px;font-size:26.6px;color:#ffb86c;letter-spacing:0.291px;">Router.go</span><span class="t" style="left:579.37px;top:1520.51px;font-size:25.5px;color:#ffb86c;">M</span><svg style="left:126px;top:1560px;color:#c5c5c5;" width="32" height="32"><use href="#chev-d"/></svg><svg style="left:164px;top:1560px;" width="32" height="32"><use href="#f-ctrl"/></svg><span class="t" style="left:207.80px;top:1563.58px;font-size:26.6px;color:#ffb86c;letter-spacing:0.693px;">service</span><div style="left:582px;top:1568px;width:16px;height:16px;border-radius:8px;background:#80603f"></div><svg style="left:179.75px;top:1604px;" width="32" height="32"><use href="#go"/></svg><span class="t" style="left:223.55px;top:1607.58px;font-size:26.6px;color:#ffb86c;letter-spacing:0.381px;">adminService.go</span><span class="t" style="left:579.37px;top:1608.51px;font-size:25.5px;color:#ffb86c;">M</span><svg style="left:179.75px;top:1648px;" width="32" height="32"><use href="#go"/></svg><span class="t" style="left:223.55px;top:1651.58px;font-size:26.6px;color:#f8f8f2;letter-spacing:0.566px;">participantService.go</span><svg style="left:179.75px;top:1692px;" width="32" height="32"><use href="#go"/></svg><span class="t" style="left:223.55px;top:1695.58px;font-size:26.6px;color:#f8f8f2;letter-spacing:0.167px;">tourService.go</span><svg style="left:126px;top:1736px;color:#c5c5c5;" width="32" height="32"><use href="#chev-d"/></svg><svg style="left:164px;top:1736px;" width="32" height="32"><use href="#f-open"/></svg><span class="t" style="left:207.80px;top:1739.58px;font-size:26.6px;color:#f8f8f2;letter-spacing:0.903px;">utils</span><span class="t" style="left:261.28px;top:1739.24px;font-size:27px;color:#8d8f90;letter-spacing:1.6px;">/</span><span class="t" style="left:273.30px;top:1739.58px;font-size:26.6px;color:#f8f8f2;letter-spacing:1.044px;">logger</span><div style="left:96px;top:1774px;width:534px;height:44px;background:#213242;"></div><div style="left:136px;top:1774px;width:2px;height:44px;background:#585b5e;"></div><svg style="left:179.75px;top:1780px;" width="32" height="32"><use href="#go"/></svg><span class="t" style="left:223.55px;top:1783.58px;font-size:26.6px;color:#f8f8f2;letter-spacing:0.715px;">logger.go</span><svg style="left:164px;top:1824px;" width="32" height="32"><use href="#file"/></svg><span class="t" style="left:207.80px;top:1827.58px;font-size:26.6px;color:#0bf26a;letter-spacing:0.585px;">__debug_bin</span><span class="t" style="left:582.37px;top:1828.51px;font-size:25.5px;color:#12b457;">U</span><svg style="left:164px;top:1868px;" width="32" height="32"><use href="#git"/></svg><span class="t" style="left:207.80px;top:1871.58px;font-size:26.6px;color:#f8f8f2;letter-spacing:0.667px;">.gitignore</span><svg style="left:164px;top:1912px;" width="32" height="32"><use href="#gomod"/></svg><span class="t" style="left:207.80px;top:1915.58px;font-size:26.6px;color:#f8f8f2;letter-spacing:0.691px;">go.mod</span><svg style="left:164px;top:1956px;" width="32" height="32"><use href="#gomod"/></svg><span class="t" style="left:207.80px;top:1959.58px;font-size:26.6px;color:#f8f8f2;letter-spacing:0.588px;">go.sum</span><div style="left:96px;top:564px;width:534px;height:44px;background:#24282d;"></div><svg style="left:100px;top:570px;color:#c5c5c5;" width="32" height="32"><use href="#chev-d"/></svg><span class="t" style="left:136.02px;top:575.33px;font-size:23px;color:#f8f8f2;font-weight:700;letter-spacing:-0.541px;">SCHEDULER</span><div style="left:96px;top:608px;width:534px;height:6px;background:linear-gradient(rgba(5,8,11,.9),rgba(5,8,11,0))"></div><div style="left:96px;top:1994px;width:534px;height:176px;background:#161a1f;"></div><div style="left:96px;top:1996px;width:534px;height:42px;background:#24282d;"></div><svg style="left:100px;top:2001px;color:#c5c5c5;" width="32" height="32"><use href="#chev-r"/></svg><span class="t" style="left:136.02px;top:2006.33px;font-size:23px;color:#f8f8f2;font-weight:700;letter-spacing:-0.109px;">OUTLINE</span><div style="left:96px;top:2040px;width:534px;height:42px;background:#24282d;"></div><svg style="left:100px;top:2045px;color:#c5c5c5;" width="32" height="32"><use href="#chev-r"/></svg><span class="t" style="left:136.02px;top:2050.33px;font-size:23px;color:#f8f8f2;font-weight:700;letter-spacing:-0.078px;">TIMELINE</span><div style="left:96px;top:2084px;width:534px;height:42px;background:#24282d;"></div><svg style="left:100px;top:2089px;color:#c5c5c5;" width="32" height="32"><use href="#chev-r"/></svg><span class="t" style="left:136.02px;top:2094.33px;font-size:23px;color:#f8f8f2;font-weight:700;letter-spacing:-0.471px;">DEPENDENCIES</span><div style="left:96px;top:2128px;width:534px;height:42px;background:#24282d;"></div><svg style="left:100px;top:2133px;color:#c5c5c5;" width="32" height="32"><use href="#chev-r"/></svg><span class="t" style="left:136.02px;top:2138.33px;font-size:23px;color:#f8f8f2;font-weight:700;letter-spacing:-0.12px;">MYSQL</span><div style="left:632px;top:54px;width:2824px;height:68px;background:#21323f;"></div><div style="left:632px;top:122px;width:2824px;height:2px;background:#553f70;"></div><div style="left:1302px;top:54px;width:238px;height:69px;background:#5d4474;"></div><svg style="left:670.5px;top:72px;" width="32" height="32"><use href="#go"/></svg><span class="t" style="left:713.30px;top:76.38px;font-size:26.6px;color:#ffb86c;letter-spacing:0.467px;">adminController.go</span><span class="t" style="left:954.37px;top:77.31px;font-size:25.5px;color:#ffb86c;">M</span><svg style="left:1053px;top:72px;" width="32" height="32"><use href="#go"/></svg><span class="t" style="left:1096.30px;top:76.38px;font-size:26.6px;color:#ffb86c;letter-spacing:0.291px;">Router.go</span><span class="t" style="left:1223.37px;top:77.31px;font-size:25.5px;color:#ffb86c;">M</span><svg style="left:1322px;top:72px;" width="32" height="32"><use href="#go"/></svg><span class="t" style="left:1364.80px;top:76.38px;font-size:26.6px;color:#f8f8f2;font-style:italic;letter-spacing:0.78px;">logger.go</span><svg style="left:1496.5px;top:72px;color:#f8f8f2;" width="32" height="32"><use href="#x"/></svg><svg style="left:1562px;top:72px;" width="32" height="32"><use href="#go"/></svg><span class="t" style="left:1605.30px;top:76.38px;font-size:26.6px;color:#ffb86c;letter-spacing:0.47px;">adminService.go</span><span class="t" style="left:1817.87px;top:77.31px;font-size:25.5px;color:#ffb86c;">M</span><svg style="left:1917px;top:72px;" width="32" height="32"><use href="#go"/></svg><span class="t" style="left:1960.60px;top:76.38px;font-size:26.6px;color:#6272a4;letter-spacing:0.616px;">participantService.go</span><svg style="left:2298px;top:72px;" width="32" height="32"><use href="#go"/></svg><span class="t" style="left:2341.20px;top:76.38px;font-size:26.6px;color:#6272a4;letter-spacing:0.278px;">TourRepo.go</span><svg style="left:2574px;top:72px;" width="32" height="32"><use href="#go"/></svg><span class="t" style="left:2616.20px;top:76.38px;font-size:26.6px;color:#e0aa00;letter-spacing:0.243px;">adminRepo.go</span><span class="t" style="left:2800.27px;top:77.31px;font-size:25.5px;color:#e0aa00;letter-spacing:-0.848px;">1, M</span><svg style="left:2925px;top:72px;" width="32" height="32"><use href="#go"/></svg><div style="left:2960px;top:54px;width:108.3px;height:68px;overflow:hidden"><span class="t" style="left:8px;top:21.88px;font-size:26.6px;color:#6272a4;letter-spacing:0.45px">participantRepo.go</span></div><svg style="left:3082px;top:72.5px;color:#c5c8c6;" width="32" height="32"><use href="#e-bug"/></svg><svg style="left:3134px;top:72.5px;color:#d0d3d1;" width="32" height="32"><use href="#e-prev"/></svg><svg style="left:3186px;top:72.5px;color:#6b7780;" width="32" height="32"><use href="#e-mid"/></svg><svg style="left:3238px;top:72.5px;color:#6b7780;" width="32" height="32"><use href="#e-next"/></svg><svg style="left:3290px;top:72.5px;color:#d0d3d1;" width="32" height="32"><use href="#e-gitc"/></svg><svg style="left:3343px;top:72.5px;color:#d0d3d1;" width="32" height="32"><use href="#e-split"/></svg><div style="left:3398px;top:87px;width:4px;height:4px;border-radius:2px;background:#d0d3d1"></div><div style="left:3408px;top:87px;width:4px;height:4px;border-radius:2px;background:#d0d3d1"></div><div style="left:3418px;top:87px;width:4px;height:4px;border-radius:2px;background:#d0d3d1"></div><div style="left:632px;top:124px;width:2824px;height:44px;background:#0d131a;"></div><div style="left:632px;top:166px;width:2824px;height:2px;background:#161c25;"></div><span class="t" style="left:663.30px;top:133.58px;font-size:26.6px;color:#6272a4;letter-spacing:1.091px;">utils</span><svg style="left:716px;top:131px;color:#6272a4;" width="32" height="32"><use href="#chev-r"/></svg><span class="t" style="left:745.80px;top:133.58px;font-size:26.6px;color:#6272a4;letter-spacing:0.944px;">logger</span><svg style="left:824px;top:131px;color:#6272a4;" width="32" height="32"><use href="#chev-r"/></svg><svg style="left:856px;top:131px;" width="32" height="32"><use href="#go"/></svg><span class="t" style="left:899.80px;top:133.58px;font-size:26.6px;color:#6272a4;letter-spacing:0.653px;">logger.go</span><svg style="left:1014px;top:131px;color:#6272a4;" width="32" height="32"><use href="#chev-r"/></svg><svg style="left:1045.5px;top:131px;color:#52bdf5;" width="32" height="32"><use href="#sym-var"/></svg><span class="t" style="left:1083.30px;top:133.58px;font-size:26.6px;color:#6272a4;letter-spacing:0.512px;">LoggerModule</span><div style="left:764px;top:1428px;width:2424px;height:36px;background:#213242;"></div><div style="left:763.5px;top:312px;width:2px;height:216px;background:#4a4d57;"></div><div style="left:763.5px;top:636px;width:2px;height:288px;background:#3b3f4a;"></div><div style="left:820.5px;top:708px;width:2px;height:72px;background:#3b3f4a;"></div><div style="left:763.5px;top:1032px;width:2px;height:144px;background:#3b3f4a;"></div><div style="left:763.5px;top:1284px;width:2px;height:72px;background:#3b3f4a;"></div><span class="t" style="left:763.87px;top:175.15px;font-size:20.5px;color:#5f6f9f;letter-spacing:0.377px;">You, 2 weeks ago | 1 author (You)</span><div class="code" style="left:632px;top:205.9px;width:80.3px;text-align:right;letter-spacing:0"><div style="color:#6272a4">1</div><div style="color:#6272a4">2</div><div style="color:#6272a4">3</div><div style="color:#6272a4">4</div><div style="color:#6272a4">5</div><div style="color:#6272a4">6</div><div style="color:#6272a4">7</div><div style="color:#6272a4">8</div><div style="color:#6272a4">9</div><div style="color:#6272a4">10</div><div style="color:#6272a4">11</div><div style="color:#6272a4">12</div><div style="color:#6272a4">13</div><div style="color:#6272a4">14</div><div style="color:#6272a4">15</div><div style="color:#6272a4">16</div><div style="color:#6272a4">17</div><div style="color:#6272a4">18</div><div style="color:#6272a4">19</div><div style="color:#6272a4">20</div><div style="color:#6272a4">21</div><div style="color:#6272a4">22</div><div style="color:#6272a4">23</div><div style="color:#6272a4">24</div><div style="color:#6272a4">25</div><div style="color:#6272a4">26</div><div style="color:#6272a4">27</div><div style="color:#6272a4">28</div><div style="color:#6272a4">29</div><div style="color:#6272a4">30</div><div style="color:#6272a4">31</div><div style="color:#6272a4">32</div><div style="color:#6272a4">33</div><div style="color:#6272a4">34</div><div style="color:#6ee3f7">35</div><div style="color:#6272a4">36</div></div><div class="code" style="left:763.5px;top:205.9px"><div><i class="k">package</i> logger</div><div> </div><div><i class="k">import</i> <i class="b1">(</i></div><div>    <i class="q">"</i><i class="s u">os</i><i class="q">"</i></div><div>    <i class="q">"</i><i class="s u">time</i><i class="q">"</i></div><div> </div><div>    <i class="q">"</i><i class="s u">go.uber.org/fx</i><i class="q">"</i></div><div>    <i class="q">"</i><i class="s u">go.uber.org/zap</i><i class="q">"</i></div><div>    <i class="q">"</i><i class="s u">go.uber.org/zap/zapcore</i><i class="q">"</i></div><div><i class="b1">)</i></div><div> </div><div><i class="k">func</i> <i class="f">getEncoder</i><i class="b1">()</i> zapcore<i class="k">.</i>Encoder <i class="b1">{</i></div><div>    encoderConfig <i class="k">:=</i> zap<i class="k">.</i><i class="m">NewProductionEncoderConfig</i><i class="b2">()</i></div><div>    encoderConfig<i class="k">.</i>EncodeTime <i class="k">=</i> zapcore<i class="k">.</i><i class="m">TimeEncoder</i><i class="b2">(</i><i class="k">func</i><i class="b3">(</i>t time<i class="k">.</i>Time, enc zapcore<i class="k">.</i>PrimitiveArrayEncoder<i class="b3">)</i> <i class="b3">{</i></div><div>        enc<i class="k">.</i><i class="m">AppendString</i><i class="b1">(</i>time<i class="k">.</i><i class="m">Now</i><i class="b2">()</i><i class="k">.</i><i class="m">UTC</i><i class="b2">()</i><i class="k">.</i><i class="m">Format</i><i class="b2">(</i><i class="q">"</i><i class="s">2006-01-02T15:04:05.999999</i><i class="q">"</i><i class="b2">)</i><i class="b1">)</i> <i class="c">// this is the format of the time added to the log</i></div><div>        <i class="c">//You can add more strings to log by using enc.AppendString("whatever you want")</i></div><div>    <i class="b3">}</i><i class="b2">)</i></div><div>    encoderConfig<i class="k">.</i>EncodeLevel <i class="k">=</i> zapcore<i class="k">.</i>CapitalLevelEncoder</div><div>    <i class="c">// encoderConfig.EncodeLevel = zapcore.CapitalColorLevelEncoder ----&gt; adds Colors to the log levels</i></div><div>    <i class="k">return</i> zapcore<i class="k">.</i><i class="m">NewConsoleEncoder</i><i class="b2">(</i>encoderConfig<i class="b2">)</i></div><div><i class="b1">}</i></div><div> </div><div><i class="k">func</i> <i class="f">initLogger</i><i class="b1">()</i> <i class="b1">{</i> <i class="c">// for logging to the console</i></div><div>    encoder <i class="k">:=</i> <i class="m">getEncoder</i><i class="b2">()</i></div><div>    core <i class="k">:=</i> zapcore<i class="k">.</i><i class="m">NewCore</i><i class="b2">(</i>encoder, zapcore<i class="k">.</i><i class="m">AddSync</i><i class="b3">(</i>os<i class="k">.</i>Stdout<i class="b3">)</i>, zap<i class="k">.</i>DebugLevel<i class="b2">)</i></div><div>    logg <i class="k">:=</i> zap<i class="k">.</i><i class="m">New</i><i class="b2">(</i>core, zap<i class="k">.</i><i class="m">AddCaller</i><i class="b3">()</i><i class="b2">)</i></div><div>    zap<i class="k">.</i><i class="m">ReplaceGlobals</i><i class="b2">(</i>logg<i class="b2">)</i></div><div><i class="b1">}</i></div><div> </div><div><i class="k">func</i> <i class="f">NewLogger</i><i class="b1">()</i> <i class="k">*</i>zap<i class="k">.</i>SugaredLogger <i class="b1">{</i></div><div>    <i class="m">initLogger</i><i class="b2">()</i></div><div>    <i class="k">return</i> zap<i class="k">.</i><i class="m">S</i><i class="b2">()</i></div><div><i class="b1">}</i></div><div> </div><div><i class="k">var</i> LoggerModule <i class="k">=</i> fx<i class="k">.</i><i class="m">Provide</i><i class="b1">(</i>NewLogger<i class="b1">)</i></div><div> </div></div><div class="code" style="left:1428.20px;top:1429.9px;color:#45546a">You, 2 weeks ago • switched DI …</div><div style="left:3188px;top:168px;width:240px;height:1406px;overflow:hidden"><div style="position:absolute;left:8px;top:136px;width:232px;height:4px;background:#213c58"></div><div class="code" style="left:8px;top:0;transform-origin:0 0;transform:scale(0.13841,0.11111);opacity:.8;font-weight:700"><div><i class="k">package</i> logger</div><div> </div><div><i class="k">import</i> <i class="b1">(</i></div><div>    <i class="q">"</i><i class="s u">os</i><i class="q">"</i></div><div>    <i class="q">"</i><i class="s u">time</i><i class="q">"</i></div><div> </div><div>    <i class="q">"</i><i class="s u">go.uber.org/fx</i><i class="q">"</i></div><div>    <i class="q">"</i><i class="s u">go.uber.org/zap</i><i class="q">"</i></div><div>    <i class="q">"</i><i class="s u">go.uber.org/zap/zapcore</i><i class="q">"</i></div><div><i class="b1">)</i></div><div> </div><div><i class="k">func</i> <i class="f">getEncoder</i><i class="b1">()</i> zapcore<i class="k">.</i>Encoder <i class="b1">{</i></div><div>    encoderConfig <i class="k">:=</i> zap<i class="k">.</i><i class="m">NewProductionEncoderConfig</i><i class="b2">()</i></div><div>    encoderConfig<i class="k">.</i>EncodeTime <i class="k">=</i> zapcore<i class="k">.</i><i class="m">TimeEncoder</i><i class="b2">(</i><i class="k">func</i><i class="b3">(</i>t time<i class="k">.</i>Time, enc zapcore<i class="k">.</i>PrimitiveArrayEncoder<i class="b3">)</i> <i class="b3">{</i></div><div>        enc<i class="k">.</i><i class="m">AppendString</i><i class="b1">(</i>time<i class="k">.</i><i class="m">Now</i><i class="b2">()</i><i class="k">.</i><i class="m">UTC</i><i class="b2">()</i><i class="k">.</i><i class="m">Format</i><i class="b2">(</i><i class="q">"</i><i class="s">2006-01-02T15:04:05.999999</i><i class="q">"</i><i class="b2">)</i><i class="b1">)</i> <i class="c">// this is the format of the time added to the log</i></div><div>        <i class="c">//You can add more strings to log by using enc.AppendString("whatever you want")</i></div><div>    <i class="b3">}</i><i class="b2">)</i></div><div>    encoderConfig<i class="k">.</i>EncodeLevel <i class="k">=</i> zapcore<i class="k">.</i>CapitalLevelEncoder</div><div>    <i class="c">// encoderConfig.EncodeLevel = zapcore.CapitalColorLevelEncoder ----&gt; adds Colors to the log levels</i></div><div>    <i class="k">return</i> zapcore<i class="k">.</i><i class="m">NewConsoleEncoder</i><i class="b2">(</i>encoderConfig<i class="b2">)</i></div><div><i class="b1">}</i></div><div> </div><div><i class="k">func</i> <i class="f">initLogger</i><i class="b1">()</i> <i class="b1">{</i> <i class="c">// for logging to the console</i></div><div>    encoder <i class="k">:=</i> <i class="m">getEncoder</i><i class="b2">()</i></div><div>    core <i class="k">:=</i> zapcore<i class="k">.</i><i class="m">NewCore</i><i class="b2">(</i>encoder, zapcore<i class="k">.</i><i class="m">AddSync</i><i class="b3">(</i>os<i class="k">.</i>Stdout<i class="b3">)</i>, zap<i class="k">.</i>DebugLevel<i class="b2">)</i></div><div>    logg <i class="k">:=</i> zap<i class="k">.</i><i class="m">New</i><i class="b2">(</i>core, zap<i class="k">.</i><i class="m">AddCaller</i><i class="b3">()</i><i class="b2">)</i></div><div>    zap<i class="k">.</i><i class="m">ReplaceGlobals</i><i class="b2">(</i>logg<i class="b2">)</i></div><div><i class="b1">}</i></div><div> </div><div><i class="k">func</i> <i class="f">NewLogger</i><i class="b1">()</i> <i class="k">*</i>zap<i class="k">.</i>SugaredLogger <i class="b1">{</i></div><div>    <i class="m">initLogger</i><i class="b2">()</i></div><div>    <i class="k">return</i> zap<i class="k">.</i><i class="m">S</i><i class="b2">()</i></div><div><i class="b1">}</i></div><div> </div><div><i class="k">var</i> LoggerModule <i class="k">=</i> fx<i class="k">.</i><i class="m">Provide</i><i class="b1">(</i>NewLogger<i class="b1">)</i></div><div> </div></div></div><div style="left:3428px;top:168px;width:28px;height:730px;background:#3c3f43;"></div><div style="left:3429px;top:821px;width:27px;height:4px;background:#77a8bc;"></div><div style="left:3427px;top:168px;width:1px;height:1406px;background:#151b23;"></div><div style="left:3008px;top:124px;width:362px;height:67px;background:#0c1219;box-shadow:0 0 12px 2px rgba(0,0,0,.7);border:1.5px solid #171d27;box-sizing:border-box"></div><svg style="left:3024px;top:142px;color:#7d7f82;" width="32" height="32"><use href="#d-grip"/></svg><svg style="left:3063px;top:142px;color:#55b9f6;" width="32" height="32"><use href="#d-cont"/></svg><svg style="left:3114px;top:142px;color:#55b9f6;" width="32" height="32"><use href="#d-over"/></svg><svg style="left:3166px;top:142px;color:#55b9f6;" width="32" height="32"><use href="#d-into"/></svg><svg style="left:3218px;top:142px;color:#55b9f6;" width="32" height="32"><use href="#d-out"/></svg><svg style="left:3270px;top:142px;color:#5ed172;" width="32" height="32"><use href="#d-restart"/></svg><svg style="left:3322px;top:142px;color:#f7736d;" width="32" height="32"><use href="#d-stop"/></svg><div style="left:632px;top:1574px;width:2824px;height:2px;background:#bd8ff7;"></div><span class="t" style="left:671.02px;top:1601.03px;font-size:23px;color:#6272a4;letter-spacing:-0.933px;">PROBLEMS</span><div style="left:813px;top:1594px;width:34px;height:34px;border-radius:17px;background:#1f3041"></div><svg style="left:822px;top:1603px" width="16" height="16" viewBox="-8 -8 16 16"><path d="M2.200 -7.600v15.400h-2.400v-12.300q-1.700 1.300-3.600 1.800v-2.200q2.700-.9 4.200-2.700z" fill="#f8f8f2"/></svg><span class="t" style="left:891.02px;top:1601.03px;font-size:23px;color:#f8f8f2;letter-spacing:-0.253px;">OUTPUT</span><div style="left:888px;top:1632px;width:100px;height:2px;background:#ff6bc9;"></div><span class="t" style="left:1031.52px;top:1601.03px;font-size:23px;color:#6272a4;letter-spacing:-0.642px;">TERMINAL</span><span class="t" style="left:1190.52px;top:1601.03px;font-size:23px;color:#6272a4;letter-spacing:-0.821px;">DEBUG CONSOLE</span><span class="t" style="left:1428.02px;top:1601.03px;font-size:23px;color:#6272a4;letter-spacing:-0.687px;">GITLENS</span><div style="left:672px;top:1644px;width:4px;height:36px;background:#5fe3f8;"></div><div style="left:2848px;top:1592px;width:340px;height:38px;box-sizing:border-box;border:2px solid #5f70a6;border-radius:8px;background:#213242"></div><span class="t" style="left:2865.93px;top:1599.76px;font-size:24.5px;color:#f8f8f2;letter-spacing:-0.798px;">Tasks</span><svg style="left:3144px;top:1595px;color:#f8f8f2;" width="32" height="32"><use href="#chev-d2"/></svg><svg style="left:3202px;top:1595px;color:#f8f8f2;" width="32" height="32"><use href="#p-clear"/></svg><svg style="left:3254px;top:1595px;color:#f8f8f2;" width="32" height="32"><use href="#p-unlock"/></svg><svg style="left:3308px;top:1595px;color:#3f4850;" width="32" height="32"><use href="#p-open"/></svg><svg style="left:3358px;top:1594px;color:#c9ccca;" width="32" height="32"><use href="#chev-u"/></svg><svg style="left:3402px;top:1594px;color:#c9ccca;" width="32" height="32"><use href="#x"/></svg><div style="left:3427px;top:1644px;width:1px;height:526px;background:#141a22;"></div><div style="left:0px;top:2170px;width:3456px;height:2px;background:#587cb3;"></div><div style="left:0px;top:2172px;width:3456px;height:42px;background:#ff3f4d;"></div><div style="left:0px;top:2172px;width:68px;height:42px;background:#ff6ec6;"></div><svg style="left:18px;top:2176px;color:#fff;" width="32" height="32"><use href="#s-remote"/></svg><svg style="left:80px;top:2176px;color:#fff;" width="32" height="32"><use href="#s-branch"/></svg><span class="t" style="left:118.90px;top:2180.94px;font-size:25px;color:#fff;letter-spacing:0.136px;">dev/Domain*</span><svg style="left:293px;top:2176px;color:#fff;" width="32" height="32"><use href="#s-sync"/></svg><span class="t" style="left:354.90px;top:2180.94px;font-size:25px;color:#fff;letter-spacing:-1.076px;">Go 1.18</span><svg style="left:435px;top:2176px;color:#fff;" width="32" height="32"><use href="#s-zap"/></svg><svg style="left:495px;top:2176px;color:#fff;" width="32" height="32"><use href="#s-error"/></svg><span class="t" style="left:531.90px;top:2180.94px;font-size:25px;color:#fff;letter-spacing:1.594px;">0</span><svg style="left:552px;top:2176px;color:#fff;" width="32" height="32"><use href="#s-warn"/></svg><span class="t" style="left:589.90px;top:2180.94px;font-size:25px;color:#fff;letter-spacing:-1.2px;">1</span><svg style="left:629px;top:2176px;color:#fff;" width="32" height="32"><use href="#s-debug"/></svg><span class="t" style="left:666.40px;top:2180.94px;font-size:25px;color:#fff;letter-spacing:0.062px;">Launch Package (Scheduler)</span><svg style="left:1021px;top:2176px;color:#fff;" width="32" height="32"><use href="#s-person"/></svg><span class="t" style="left:1057.40px;top:2180.94px;font-size:25px;color:#fff;letter-spacing:-0.324px;">Karim</span><svg style="left:1125px;top:2176px;" width="32" height="32"><use href="#s-lock"/></svg><svg style="left:1183px;top:2176px;color:#fff;" width="32" height="32"><use href="#s-share"/></svg><span class="t" style="left:1219.40px;top:2180.94px;font-size:25px;color:#fff;letter-spacing:-0.059px;">Live Share</span><span class="t" style="left:1368.90px;top:2180.94px;font-size:25px;color:#fff;letter-spacing:0.555px;">pikachu</span><span class="t" style="left:1488.90px;top:2180.94px;font-size:25px;color:#fff;letter-spacing:0.141px;">Git Graph</span><svg style="left:1627.5px;top:2176px;color:#fff;" width="32" height="32"><use href="#s-history"/></svg><span class="t" style="left:1664.90px;top:2180.94px;font-size:25px;color:#fff;letter-spacing:0.37px;">2 hrs 44 mins</span><span class="t" style="left:1970.90px;top:2180.94px;font-size:25px;color:#fff;letter-spacing:-0.156px;">Ln 35, Col 11</span><span class="t" style="left:2147.40px;top:2180.94px;font-size:25px;color:#fff;letter-spacing:0.081px;">Tab Size: 4</span><span class="t" style="left:2302.90px;top:2180.94px;font-size:25px;color:#fff;letter-spacing:0.918px;">UTF-8</span><span class="t" style="left:2408.90px;top:2180.94px;font-size:25px;color:#fff;letter-spacing:-0.688px;">LF</span><span class="t" style="left:2467.90px;top:2180.94px;font-size:25px;color:#fff;letter-spacing:0.141px;">Go</span><svg style="left:2530px;top:2176px;color:#fff;" width="32" height="32"><use href="#s-broadcast"/></svg><span class="t" style="left:2566.90px;top:2180.94px;font-size:25px;color:#fff;letter-spacing:-0.029px;">Go Live</span><svg style="left:2681.5px;top:2176px;color:#fff;" width="32" height="32"><use href="#s-history"/></svg><span class="t" style="left:2718.90px;top:2180.94px;font-size:25px;color:#fff;letter-spacing:-0.078px;">2h 18m</span><svg style="left:2831.5px;top:2176px;color:#fff;" width="32" height="32"><use href="#s-circle"/></svg><span class="t" style="left:2867.90px;top:2180.94px;font-size:25px;color:#fff;letter-spacing:0.068px;">Flow</span><svg style="left:2950px;top:2176px;color:#fff;" width="32" height="32"><use href="#s-warn"/></svg><span class="t" style="left:2986.90px;top:2180.94px;font-size:25px;color:#fff;letter-spacing:0.084px;">Go Update Available</span><svg style="left:3245px;top:2176px;color:#fff;" width="32" height="32"><use href="#s-copilot"/></svg><svg style="left:3304.5px;top:2176px;color:#fff;" width="32" height="32"><use href="#s-checkall"/></svg><span class="t" style="left:3341.90px;top:2180.94px;font-size:25px;color:#fff;letter-spacing:0.629px;">Prettier</span></div>
</body></html>
